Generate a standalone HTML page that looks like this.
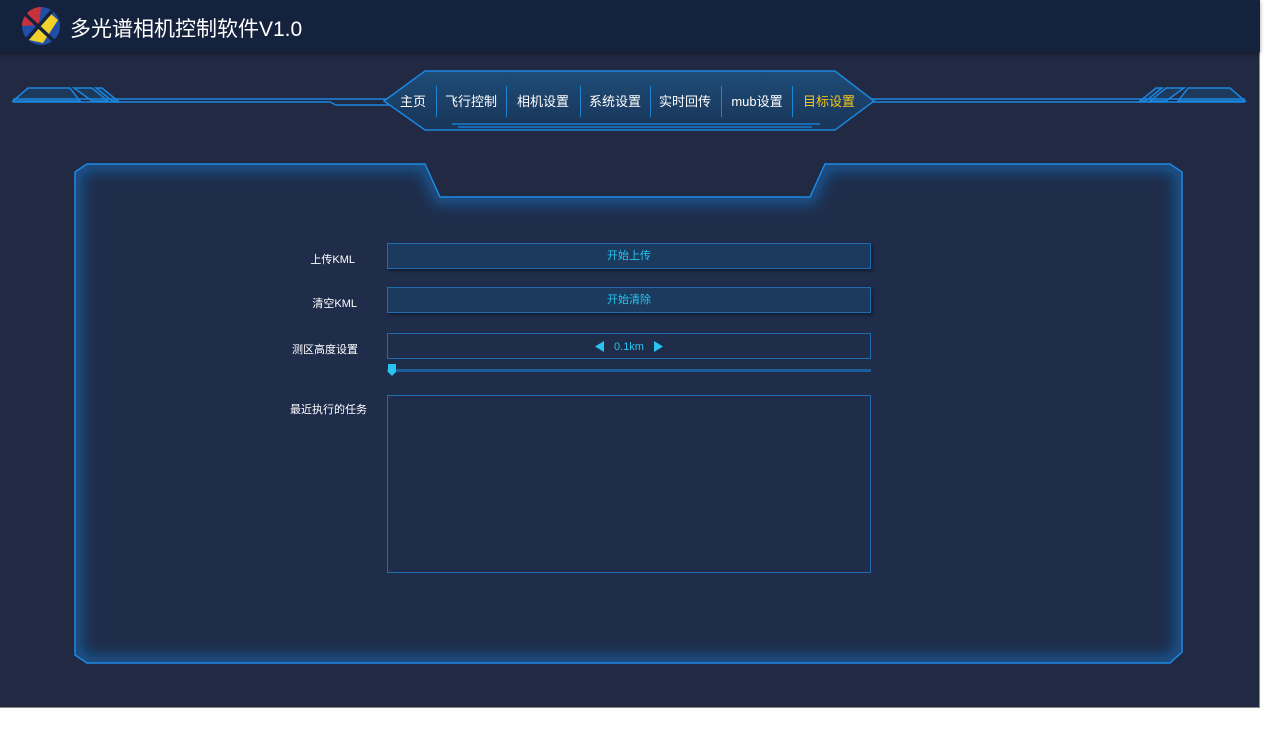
<!DOCTYPE html>
<html><head><meta charset="utf-8"><style>
*{margin:0;padding:0;box-sizing:border-box}
body{width:1280px;height:754px;background:#fff;font-family:"Liberation Sans","Noto Sans CJK SC",sans-serif;position:relative;overflow:hidden}
#app{position:absolute;left:0;top:0;width:1260px;height:708px;background:#222a43;border-right:1px solid #888;border-bottom:1px solid #888}
#hdr{position:absolute;left:0;top:0;width:1260px;height:52px;background:#15223d;box-shadow:0 2px 4px rgba(0,0,0,.4)}
#hdr .t{position:absolute;left:70px;top:13px;color:#fff;font-size:21px}
.nav{position:absolute;top:91px;color:#fff;font-size:13px;transform:translateX(-50%);white-space:nowrap}
.sep{position:absolute;top:86px;width:1px;height:31px;background:#1b86d8}
.lab{position:absolute;color:#fff;font-size:11px;text-align:right;white-space:nowrap}
.btn{position:absolute;left:387px;width:484px;height:26px;background:#1b3a5e;border:1px solid #1f6cae;color:#27c4f0;font-size:11px;text-align:center;line-height:24px;box-shadow:2px 2px 3px rgba(0,0,0,.4)}
</style></head><body>
<div id="app">
<div id="hdr">
<svg style="position:absolute;left:21px;top:6px" width="42" height="42" viewBox="0 0 42 42">
<circle cx="20" cy="20" r="19" fill="#1f4fa8"/>
<path d="M20 1A19 19 0 0 0 1 20L18 19Z" fill="#c8323a"/>
<path d="M8 34L30 8 37 14 22 37Z" fill="#f2d22a"/>
<path d="M4 8L34 36" stroke="#15223d" stroke-width="3.5"/>
<path d="M6 33L31 5" stroke="#15223d" stroke-width="3.5"/>
</svg>
<div class="t">多光谱相机控制软件V1.0</div>
</div>
<svg style="position:absolute;left:0;top:0" width="1260" height="708">
<defs><linearGradient id="ng" x1="0" y1="0" x2="0" y2="1"><stop offset="0" stop-color="#1e4c78"/><stop offset="1" stop-color="#1a3558"/></linearGradient>
<filter id="gl" x="-5%" y="-5%" width="110%" height="110%"><feGaussianBlur stdDeviation="7"/></filter>
<clipPath id="pc"><path d="M87 164H425L440 197H810L825 164H1170L1182 172V652L1170 663H87L75 655V172Z"/></clipPath></defs>
<g stroke="#1b86e0" stroke-width="1.5" fill="#1d3a5c">
<path d="M13 101L28 88H70L80 101Z"/><path d="M74 88H92L108 101H92Z"/><path d="M96 88H102L118 101H112Z"/>
<path d="M1245 101L1230 88H1188L1178 101Z"/><path d="M1184 88H1166L1150 101H1166Z"/><path d="M1162 88H1156L1140 101H1146Z"/>
</g>
<g stroke="#1b86e0" stroke-width="1.5" fill="none">
<path d="M13 99H390M13 102H330L336 105H390"/>
<path d="M870 99H1245M870 102H1245"/>
</g>
<path d="M384 101L425 71H835L874 101L835 130H425Z" fill="url(#ng)" stroke="#1b86e0" stroke-width="1.5"/>
<path d="M452 124H820M458 127H812" stroke="#1b86e0" stroke-width="1.2"/>
<path d="M87 164H425L440 197H810L825 164H1170L1182 172V652L1170 663H87L75 655V172Z" fill="#1f2d4b"/>
<g clip-path="url(#pc)"><path d="M87 164H425L440 197H810L825 164H1170L1182 172V652L1170 663H87L75 655V172Z" fill="none" stroke="#1a7ad0" stroke-width="14" stroke-opacity=".55" filter="url(#gl)"/></g>
<path d="M87 164H425L440 197H810L825 164H1170L1182 172V652L1170 663H87L75 655V172Z" fill="none" stroke="#1a8ae6" stroke-width="1.5"/>
<rect x="387.5" y="333.5" width="483" height="25" fill="none" stroke="#1f6cae"/>
<rect x="387" y="369" width="484" height="3" fill="#1a5e9a"/>
<path d="M388 364H396V372L392 376L388 372Z" fill="#27c4f0"/>
<rect x="387.5" y="395.5" width="483" height="177" fill="#1f2d4b" stroke="#1f6cae"/>
<path d="M604 341V352L595 346.5Z M654 341V352L663 346.5Z" fill="#27c4f0"/>
<text x="629" y="350" fill="#27c4f0" font-size="11" text-anchor="middle" font-family="Liberation Sans,sans-serif">0.1km</text>
</svg>
<div class="nav" style="left:413px">主页</div>
<div class="nav" style="left:471px">飞行控制</div>
<div class="nav" style="left:543px">相机设置</div>
<div class="nav" style="left:615px">系统设置</div>
<div class="nav" style="left:685px">实时回传</div>
<div class="nav" style="left:757px">mub设置</div>
<div class="nav" style="left:829px;color:#f5c518">目标设置</div>
<div class="sep" style="left:436px"></div><div class="sep" style="left:506px"></div><div class="sep" style="left:580px"></div><div class="sep" style="left:650px"></div><div class="sep" style="left:721px"></div><div class="sep" style="left:792px"></div>
<div class="lab" style="right:904px;top:251px">上传KML</div>
<div class="lab" style="right:902px;top:295px">清空KML</div>
<div class="lab" style="right:901px;top:341px">测区高度设置</div>
<div class="lab" style="right:892px;top:401px">最近执行的任务</div>
<div class="btn" style="top:243px">开始上传</div>
<div class="btn" style="top:287px">开始清除</div>
</div>
</body></html>
